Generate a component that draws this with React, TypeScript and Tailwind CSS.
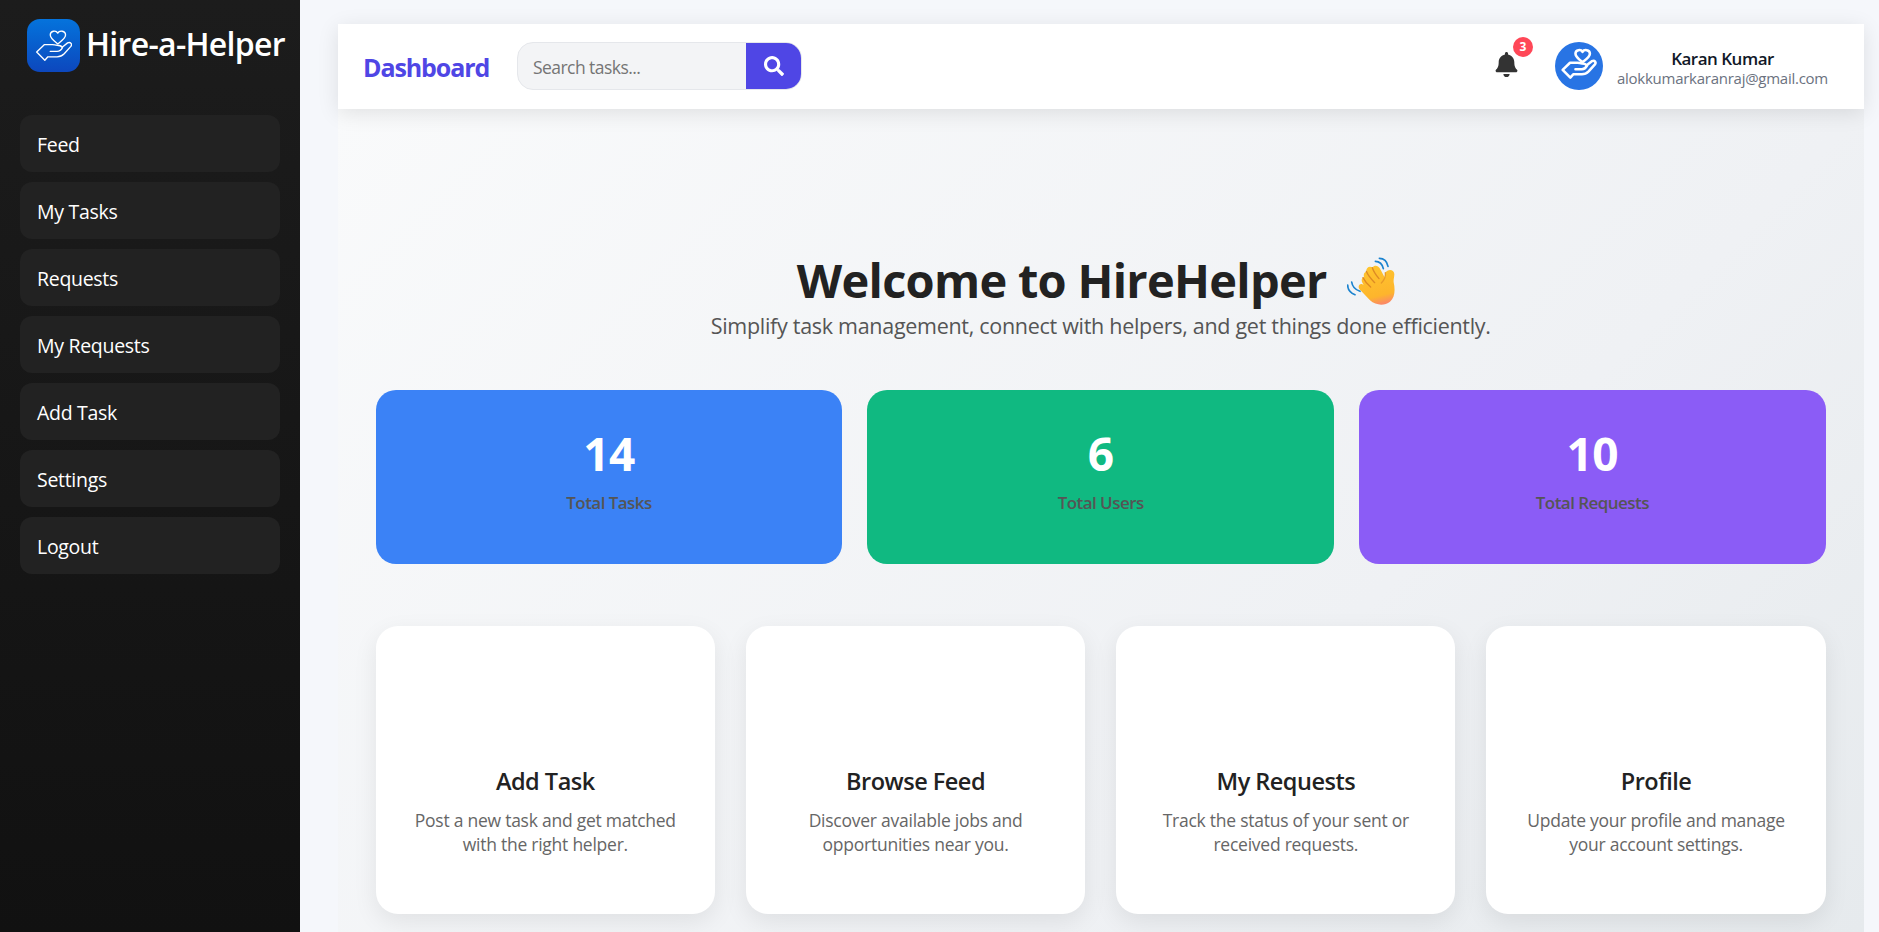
import { FaBell, FaSearch } from "react-icons/fa";

const nav = ["Feed", "My Tasks", "Requests", "My Requests", "Add Task", "Settings", "Logout"];

const stats = [
  { value: "14", label: "Total Tasks", color: "bg-[#3b82f6]" },
  { value: "6", label: "Total Users", color: "bg-[#10b981]" },
  { value: "10", label: "Total Requests", color: "bg-[#8b5cf6]" },
];

const actions = [
  { title: "Add Task", text: ["Post a new task and get matched", "with the right helper."] },
  { title: "Browse Feed", text: ["Discover available jobs and", "opportunities near you."] },
  { title: "My Requests", text: ["Track the status of your sent or", "received requests."] },
  { title: "Profile", text: ["Update your profile and manage", "your account settings."] },
];

function HandHeart({ className, strokeWidth }: { className: string; strokeWidth: number }) {
  return (
    <svg viewBox="0 0 106 92" className={className} fill="none" stroke="currentColor" strokeWidth={strokeWidth} strokeLinecap="round" strokeLinejoin="round">
      <path d="M64 9c-5-9-22-7-22 6 0 10 13 19 22 26 9-7 23-16 23-26 0-13-18-15-23-6z" />
      <path d="M25 43 2 65l24 24 9-10h27c8 0 15-3 21-9l19-21c6-7 0-15-9-11L77 51c-3-5-8-6-15-6-6 0-8-2-14-2H25z" />
      <path d="M42 63h20c7 0 12-3 16-11" />
    </svg>
  );
}

function WavingHand() {
  return (
    <svg viewBox="0 0 144 144" className="h-12 w-12" fill="none">
      <defs>
        <linearGradient id="palm" x1="60" y1="20" x2="90" y2="144" gradientUnits="userSpaceOnUse">
          <stop offset="0" stopColor="#ffc62e" />
          <stop offset="0.8" stopColor="#fdb52c" />
          <stop offset="1" stopColor="#fb8a66" />
        </linearGradient>
      </defs>
      <path d="M116 47c4-10 25-12 26 4 0 10-3 16-2 25 5 22 4 45-11 58-16 13-42 12-60-4L39 98c-8-8-3-18 5-17l6 2c-9-11-7-20 1-22-2-9 0-15 7-17-1-12 8-18 18-13 8-9 19-5 24 6l14 26z" fill="url(#palm)" />
      <path d="M58 43c4 10 14 23 25 34M76 32c4 12 11 22 20 33M48 62c5 10 13 20 23 28" stroke="#dd8a25" strokeWidth="4" strokeLinecap="round" />
      <path d="M115 47c2 12-3 22-12 31" stroke="#e89a28" strokeWidth="4" strokeLinecap="round" />
      <path d="M97 4c13 0 23 9 26 24M85 13c13 0 21 8 24 22M2 84c0 14 8 24 22 29M14 75c2 14 10 23 25 28" stroke="#1b83cf" strokeWidth="5" strokeLinecap="round" />
    </svg>
  );
}

export default function App() {
  return (
    <div className="flex h-[932px] w-full overflow-hidden bg-[#f5f7fb] font-['Open_Sans',sans-serif]">
      <aside className="flex w-[300px] shrink-0 flex-col bg-linear-to-b from-[#1c1c1c] to-[#111111] px-5">
        <div className="flex h-[115px] items-start pt-[19px] pl-[7px]">
          <div className="flex h-[53px] w-[53px] shrink-0 items-center justify-center rounded-[13px] bg-linear-to-b from-[#0573dc] to-[#0d47bd] text-white">
            <HandHeart className="w-9" strokeWidth={4} />
          </div>
          <span className="ml-[6px] text-[32px] leading-[49px] font-semibold tracking-[-0.7px] whitespace-nowrap text-white">Hire-a-Helper</span>
        </div>
        <nav className="flex flex-col gap-2.5">
          {nav.map((item) => (
            <a key={item} className="flex h-[57px] items-center rounded-xl bg-[#222222] px-[17px] pt-[3px] text-[19.5px] tracking-[-0.3px] text-white">
              {item}
            </a>
          ))}
        </nav>
      </aside>

      <main className="flex flex-1 flex-col pt-6 pr-[15px] pl-[38px]">
        <header className="relative z-10 flex h-[85px] shrink-0 items-center bg-white pr-9 pb-px pl-[25px] shadow-[0_4px_20px_rgba(0,0,0,0.1)]">
          <h1 className="w-[127px] pt-0.5 text-[25px] leading-8 font-bold tracking-[-1.1px] text-[#4f46e5]">Dashboard</h1>
          <div className="ml-[27px] flex h-12 w-[285px] overflow-hidden rounded-2xl border border-[#e5e7eb] bg-[#f3f4f6]">
            <div className="flex flex-1 items-center pt-0.5 pl-[15px] text-[17.5px] tracking-[-0.55px] text-[#757575]">Search tasks...</div>
            <button className="flex w-[55px] items-center justify-center bg-[#4f46e5] text-white">
              <FaSearch size={20} />
            </button>
          </div>
          <div className="ml-auto flex items-center">
            <div className="relative mb-[3px] text-[#333333]">
              <FaBell size={25} />
              <span className="absolute -top-[15px] -right-3.5 flex h-5 w-5 items-center justify-center rounded-full bg-[#ff4757] text-xs font-bold text-white">3</span>
            </div>
            <div className="ml-9 flex h-12 w-12 items-center justify-center rounded-full bg-[#2874e4] text-white">
              <HandHeart className="mb-1 w-[34px] overflow-visible" strokeWidth={8} />
            </div>
            <div className="ml-3.5 flex flex-col items-center pt-[3px]">
              <span className="text-[17px] leading-5 font-semibold tracking-[-0.5px] text-[#111827]">Karan Kumar</span>
              <span className="text-[15px] leading-[18px] font-medium tracking-[-0.26px] text-[#6b7280]">alokkumarkaranraj@gmail.com</span>
            </div>
          </div>
        </header>

        <section className="flex flex-1 flex-col bg-linear-135 from-[#f9fafb] via-[#eff1f4] via-65% to-[#e6eaed] pt-[144px] pr-[38.3px] pl-[37.7px]">
          <div className="flex flex-col items-center">
            <h2 className="flex h-14 items-center text-[47px] font-bold tracking-[-0.72px] text-[#222222]">
              <span className="-mt-0.5">Welcome to HireHelper</span>
              <span className="mr-2.5 ml-5"><WavingHand /></span>
            </h2>
            <p className="pt-px text-[21.5px] leading-8 tracking-[-0.29px] text-[#555555]">Simplify task management, connect with helpers, and get things done efficiently.</p>
          </div>
          <div className="mt-12 grid grid-cols-3 gap-[25px]">
            {stats.map((s) => (
              <div key={s.label} className={`flex h-[174px] flex-col items-center rounded-[20px] pt-[34px] ${s.color}`}>
                <span className="text-[46px] leading-[58px] font-bold tracking-[-0.5px] text-white">{s.value}</span>
                <span className="mt-1.5 text-[17px] leading-[30px] font-semibold tracking-[-0.55px] text-[#555555]">{s.label}</span>
              </div>
            ))}
          </div>
          <div className="mt-[62px] grid grid-cols-4 gap-[31px]">
            {actions.map((a) => (
              <div key={a.title} className="flex h-72 flex-col items-center rounded-[22px] bg-white pt-[139px] shadow-[0_8px_25px_rgba(0,0,0,0.08)]">
                <h3 className="text-[23.5px] leading-8 font-semibold tracking-[-0.5px] text-[#222222]">{a.title}</h3>
                <p className="mt-[11px] flex flex-col items-center text-[17.5px] leading-6 tracking-[-0.25px] text-[#666666]">
                  {a.text.map((line) => (
                    <span key={line}>{line}</span>
                  ))}
                </p>
              </div>
            ))}
          </div>
        </section>
      </main>
    </div>
  );
}
